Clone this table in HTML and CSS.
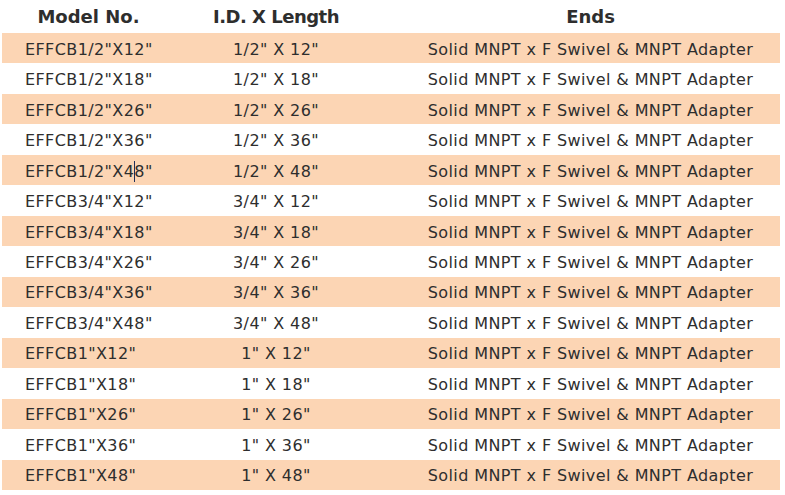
FILE: index.html
```html
<!DOCTYPE html>
<html>
<head>
<meta charset="utf-8">
<link rel="stylesheet" href="styles.css">
</head>
<body>
<div class="table">
  <div class="row head">
    <div class="c1">Model No.</div>
    <div class="c2">I.D. X Length</div>
    <div class="c3">Ends</div>
  </div>
  <div class="row alt"><div class="c1">EFFCB1/2"X12"</div><div class="c2">1/2" X 12"</div><div class="c3">Solid MNPT x F Swivel &amp; MNPT Adapter</div></div>
  <div class="row"><div class="c1">EFFCB1/2"X18"</div><div class="c2">1/2" X 18"</div><div class="c3">Solid MNPT x F Swivel &amp; MNPT Adapter</div></div>
  <div class="row alt"><div class="c1">EFFCB1/2"X26"</div><div class="c2">1/2" X 26"</div><div class="c3">Solid MNPT x F Swivel &amp; MNPT Adapter</div></div>
  <div class="row"><div class="c1">EFFCB1/2"X36"</div><div class="c2">1/2" X 36"</div><div class="c3">Solid MNPT x F Swivel &amp; MNPT Adapter</div></div>
  <div class="row alt"><div class="c1">EFFCB1/2"X4<span class="caret"></span>8"</div><div class="c2">1/2" X 48"</div><div class="c3">Solid MNPT x F Swivel &amp; MNPT Adapter</div></div>
  <div class="row"><div class="c1">EFFCB3/4"X12"</div><div class="c2">3/4" X 12"</div><div class="c3">Solid MNPT x F Swivel &amp; MNPT Adapter</div></div>
  <div class="row alt"><div class="c1">EFFCB3/4"X18"</div><div class="c2">3/4" X 18"</div><div class="c3">Solid MNPT x F Swivel &amp; MNPT Adapter</div></div>
  <div class="row"><div class="c1">EFFCB3/4"X26"</div><div class="c2">3/4" X 26"</div><div class="c3">Solid MNPT x F Swivel &amp; MNPT Adapter</div></div>
  <div class="row alt"><div class="c1">EFFCB3/4"X36"</div><div class="c2">3/4" X 36"</div><div class="c3">Solid MNPT x F Swivel &amp; MNPT Adapter</div></div>
  <div class="row"><div class="c1">EFFCB3/4"X48"</div><div class="c2">3/4" X 48"</div><div class="c3">Solid MNPT x F Swivel &amp; MNPT Adapter</div></div>
  <div class="row alt"><div class="c1">EFFCB1"X12"</div><div class="c2">1" X 12"</div><div class="c3">Solid MNPT x F Swivel &amp; MNPT Adapter</div></div>
  <div class="row"><div class="c1">EFFCB1"X18"</div><div class="c2">1" X 18"</div><div class="c3">Solid MNPT x F Swivel &amp; MNPT Adapter</div></div>
  <div class="row alt"><div class="c1">EFFCB1"X26"</div><div class="c2">1" X 26"</div><div class="c3">Solid MNPT x F Swivel &amp; MNPT Adapter</div></div>
  <div class="row"><div class="c1">EFFCB1"X36"</div><div class="c2">1" X 36"</div><div class="c3">Solid MNPT x F Swivel &amp; MNPT Adapter</div></div>
  <div class="row alt"><div class="c1">EFFCB1"X48"</div><div class="c2">1" X 48"</div><div class="c3">Solid MNPT x F Swivel &amp; MNPT Adapter</div></div>
</div>
</body>
</html>
```

FILE: styles.css
```css
html, body {
  margin: 0;
  padding: 0;
  background: #ffffff;
}
.table {
  margin-left: 2px;
  width: 778px;
  font-family: "DejaVu Sans", "Liberation Sans", sans-serif;
  color: #2e2e2e;
  font-size: 16px;
  letter-spacing: 0.4px;
}
.row {
  display: grid;
  grid-template-columns: 173px 202px 403px;
  align-items: center;
  height: 30.47px;
  padding-top: 2px;
  box-sizing: border-box;
}
.row.alt {
  background: #fcd5b4;
}
.row.head {
  height: 33px;
  font-weight: bold;
  font-size: 18px;
  letter-spacing: 0;
  align-items: start;
  padding-top: 6px;
}
.c1 {
  padding-left: 23px;
  white-space: nowrap;
}
.head .c1 {
  padding-left: 0;
  text-align: center;
}
.c2 {
  text-align: center;
  white-space: nowrap;
}
.head .c2 {
  letter-spacing: -0.5px;
}
.c3 {
  padding-left: 24px;
  text-align: center;
  white-space: nowrap;
}
.caret {
  display: inline-block;
  width: 0;
  height: 21px;
  border-left: 1px solid #1f2f5a;
  margin-right: -1px;
  vertical-align: -5px;
}
```
